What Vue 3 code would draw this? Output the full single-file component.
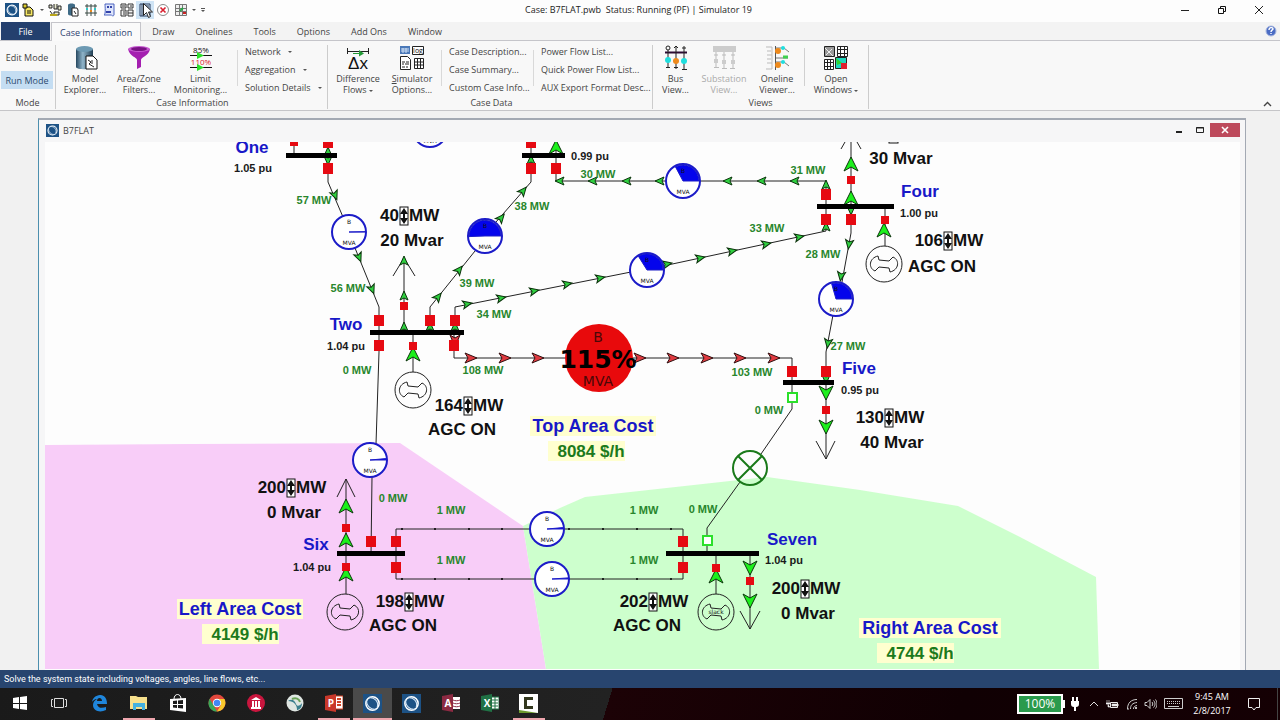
<script setup>
const tabs = ['Draw', 'Onelines', 'Tools', 'Options', 'Add Ons', 'Window']

const areas = [
  { fill: '#f8cdf8', points: '45,445 190,444 400,443 523,526 546,669 45,669' },
  { fill: '#cdffcd', points: '523,526 560,508 585,497 767,477 860,490 958,506 1020,537 1096,577 1099,669 546,669' }
]

const wires = [
  '294,142 294,155', '328,142 328,182 343,217', '355,248 379,307 379,352 376,444', '372,477 371,555',
  '404,258 404,332', '413,332 413,372', '430,332 430,307 475,251', '496,222 531,182 531,142',
  '556,142 556,181 826,181 826,206', '826,206 826,231 663,266', '631,272 455,307 455,332',
  '454,332 454,358 792,358 792,383', '851,142 851,233 842,282', '833,315 826,352 826,459',
  '885,206 885,246', '792,383 792,409 761,454', '740,482 707,528 707,555', '346,479 346,594',
  '396,555 396,529 683,529 683,579 396,579 396,555', '716,555 716,594', '750,555 750,629',
  '393,276 404,258 415,276', '337,497 346,479 355,497', '816,441 826,459 835,441',
  '740,611 750,629 760,611', '841,149 845,142', '857,142 861,149'
]

const buses = [
  [286, 337, 156], [522, 565, 156], [817, 894, 207], [370, 464, 333],
  [783, 834, 383], [337, 405, 554], [666, 759, 554]
]

const breakers = [
  [328, 142], [328, 168], [531, 142], [531, 168], [556, 168], [826, 194], [826, 219], [851, 219],
  [379, 320], [430, 320], [455, 320], [379, 345], [454, 345], [792, 371], [826, 371],
  [371, 541], [396, 541], [396, 567], [683, 541], [683, 567]
]
const smallBreakers = [
  [294, 142], [404, 306], [413, 346], [851, 180], [885, 220], [826, 410], [346, 528], [346, 567], [716, 568], [750, 581]
]
const openBreakers = [[792, 397], [707, 540]]

// x, y, heading in degrees
const flow = [
  [335, 195, 68], [359, 257, 68], [372, 289, 68], [438, 297, -51], [459, 270, -51], [501, 218, -50], [523, 191, -50],
  [560, 181, 180], [593, 181, 180], [627, 181, 180], [660, 181, 180], [728, 181, 180], [762, 181, 180], [795, 181, 180],
  [826, 185, -90], [826, 227, -90], [667, 264, -12], [700, 258, -12], [732, 251, -12], [766, 244, -12], [799, 237, -12],
  [467, 304, -12], [501, 298, -12], [534, 291, -12], [567, 284, -12], [600, 278, -12],
  [849, 244, 98], [841, 276, 98], [828, 343, 98], [404, 261, -90], [404, 296, -90], [404, 327, -90],
  [430, 327, -90], [455, 327, -90], [328, 152, -90], [328, 160, 90], [531, 160, -90], [851, 210, 90], [826, 379, 90]
]
const strongFlow = [
  [556, 148, -90], [851, 165, -90], [851, 199, -90], [884, 231, -90], [413, 355, -90], [826, 392, 90], [826, 426, 90],
  [346, 507, -90], [346, 541, -90], [346, 575, -90], [716, 577, -90], [750, 567, 90], [750, 600, 90]
]
const overload = [471, 505, 538, 640, 673, 707, 740, 774]
const dots = [402, 435, 469, 502, 569, 603, 637, 671]

const pies = [
  [430, 130, 0], [349, 232, 1], [485, 236, 182], [683, 181, 118], [647, 270, 122], [836, 299, 106],
  [370, 460, 5], [547, 529, 5], [552, 579, 4]
]
function wedge(x, y, deg) {
  const a = (deg * Math.PI) / 180
  const ex = (x + 16 * Math.cos(a)).toFixed(1)
  const ey = (y - 16 * Math.sin(a)).toFixed(1)
  return `M${x} ${y}H${x + 16}A16 16 0 ${deg > 180 ? 1 : 0} 0 ${ex} ${ey}Z`
}

const generators = [[413, 390], [884, 264], [345, 612], [716, 612]]

const flows = [
  [314, 200, '57'], [348, 288, '56'], [532, 206, '38'], [477, 283, '39'], [494, 314, '34'], [598, 174, '30'],
  [808, 170, '31'], [767, 228, '33'], [823, 254, '28'], [848, 346, '27'], [357, 370, '0'], [483, 370, '108'],
  [752, 372, '103'], [769, 410, '0'], [393, 498, '0'], [703, 509, '0'], [451, 510, '1'], [644, 510, '1'],
  [451, 560, '1'], [644, 560, '1']
]
const volts = [
  [253, 168, '1.05'], [590, 156, '0.99'], [919, 213, '1.00'], [346, 346, '1.04'], [860, 390, '0.95'],
  [312, 567, '1.04'], [784, 560, '1.04']
]
const names = [
  [252, 148, 'One'], [920, 192, 'Four'], [346, 325, 'Two'], [859, 369, 'Five'], [316, 545, 'Six'], [792, 540, 'Seven']
]
const notes = [
  [412, 241, '20 Mvar'], [901, 159, '30 Mvar'], [892, 443, '40 Mvar'], [294, 513, '0 Mvar'], [808, 614, '0 Mvar'],
  [942, 267, 'AGC ON'], [462, 430, 'AGC ON'], [403, 626, 'AGC ON'], [647, 626, 'AGC ON']
]
const setpoints = [
  [404, 216, 40], [948, 241, 106], [468, 406, 164], [889, 418, 130],
  [291, 488, 200], [409, 602, 198], [653, 602, 202], [805, 589, 200]
]
const costs = [
  { x: 593, y: 426, w: 126, vx: 586, label: 'Top Area Cost', value: '8084 $/h' },
  { x: 240, y: 609, w: 126, vx: 240, label: 'Left Area Cost', value: '4149 $/h' },
  { x: 930, y: 628, w: 142, vx: 915, label: 'Right Area Cost', value: '4744 $/h' }
]
</script>

<template>
  <div class="app">
    <svg class="defs" aria-hidden="true">
      <symbol id="pw" viewBox="0 0 20 20">
        <rect width="20" height="20" fill="#1d5285" />
        <circle cx="10" cy="10" r="7" fill="none" stroke="#fff" stroke-width="1.6" />
        <path d="M4 6C3 12 8 17 14 16M6 4C12 3 17 8 15 14" fill="none" stroke="#cfe3f5" stroke-width="1.2" />
      </symbol>
    </svg>

    <header class="titlebar">
      <div class="quick">
        <svg class="logo" width="14" height="14"><use href="#pw" /></svg>
        <button class="q" aria-label="Open case">
          <svg width="14" height="14"><path d="M3 4h5l3 3v6H3z" fill="#f5e663" stroke="#111" /><path d="M1 1h4v4H1zM5 8h4M5 10h4" fill="#d9c92c" stroke="#111" /></svg>
        </button>
        <button class="q caret" aria-label="Open recent"><i class="down"></i></button>
        <button class="q" aria-label="Save case">
          <svg width="14" height="14"><path d="M1 2h3v3H1zM6 1v5h3V1M10 3h3v4h-3zM2 8l3 4M6 9h5v3H6z" fill="#e9e9d0" stroke="#222" /><path d="M2 12h7" stroke="#b9a51c" stroke-width="2" /></svg>
        </button>
        <button class="q" aria-label="Model explorer">
          <svg width="14" height="14"><path d="M2 2c0-2 7-2 7 0v9c0 2-7 2-7 0z" fill="#3f6b86" /><path d="M6 5h5l1 2v6H6z" fill="#fff" stroke="#222" /><path d="M8 8l2 3" stroke="#222" /></svg>
        </button>
        <button class="q" aria-label="Bus view">
          <svg width="14" height="14"><path d="M1 3h12M1 10h12M3 1v12M7 1v12M11 1v12" stroke="#3b4a44" fill="none" /><path d="M2 6h2M10 6h2" stroke="#2bc7c7" stroke-width="2" /><path d="M6 8h2" stroke="#e88a1f" stroke-width="2" /></svg>
        </button>
        <button class="q" aria-label="Log">
          <svg width="14" height="14"><path d="M3 1h9v11c-1 2-2 0-3 0H2c2-1 1-8 1-11z" fill="#dfe6fb" stroke="#4a62c0" /><path d="M5 4h2M8 4h2M4 9h5" stroke="#3344aa" stroke-width="2" /></svg>
        </button>
        <button class="q" aria-label="Simulator options">
          <svg width="14" height="14"><path d="M1 1h5v4H1zM8 1h5v4H8zM1 7h5v6H1zM8 7h5v6H8z" fill="#f4f4f4" stroke="#333" /><path d="M8 10h5M3 9h2M3 11h2M10 3h2M2 3h3" stroke="#333" /></svg>
        </button>
        <button class="q hot" aria-label="Solve power flow">
          <svg width="14" height="14"><path d="M2 1h10v12H2z" fill="#dcebf5" stroke="#243a5e" /><path d="M4 1v12M6 3h5M6 5h5M6 7h5" stroke="#243a5e" /></svg>
        </button>
        <button class="q" aria-label="Abort">
          <svg width="14" height="14"><circle cx="7" cy="7" r="5.500" fill="#fff" stroke="#888" /><path d="M4.500 4.500l5 5M9.500 4.500l-5 5" stroke="#d81f2e" stroke-width="1.600" /></svg>
        </button>
        <button class="q" aria-label="Open windows">
          <svg width="14" height="14"><path d="M1.500 1.500h11v11h-11zM1 5.500h12M1 8.500h12M5.500 1v12M8.500 1v12" fill="#eee" stroke="#777" /><path d="M6 8l3-3" stroke="#26a944" stroke-width="2" /><path d="M9 10h3" stroke="#c22" stroke-width="2" /></svg>
        </button>
        <button class="q caret" aria-label="Window choices"><i class="down"></i></button>
        <button class="q more" aria-label="Customize toolbar"><b></b><i class="down"></i></button>
      </div>
      <h1>Case: B7FLAT.pwb&nbsp; Status: Running (PF) | Simulator 19</h1>
      <div class="winctl">
        <button aria-label="Minimize"><svg width="10" height="10"><path d="M1 5.500h8" stroke="#222" /></svg></button>
        <button aria-label="Restore"><svg width="10" height="10"><path d="M1.500 3.500h5v5h-5zM3.500 3V1.500h5v5H7" fill="none" stroke="#111" /></svg></button>
        <button aria-label="Close"><svg width="10" height="10"><path d="M1 1l8 8M9 1l-8 8" stroke="#222" /></svg></button>
      </div>
    </header>

    <nav class="tabs">
      <button class="file">File</button>
      <button class="tab current">Case Information</button>
      <button v-for="t in tabs" :key="t" class="tab">{{ t }}</button>
      <button class="help" aria-label="Help">
        <svg width="12" height="12"><circle cx="6" cy="6" r="5" fill="#4a6cc4" stroke="#a9b8df" /><path d="M4 5c0-3 4-3 4-1 0 1-2 1-2 3M6 8v1" fill="none" stroke="#fff" stroke-width="1.400" /></svg>
      </button>
    </nav>

    <section class="ribbon">
      <div class="group mode">
        <div class="body modes">
          <button>Edit Mode</button>
          <button class="on">Run Mode</button>
        </div>
        <h2>Mode</h2>
      </div>

      <div class="group info">
        <div class="body">
          <button class="big">
            <svg width="26" height="26">
              <defs><linearGradient id="drum"><stop offset="0" stop-color="#274860" /><stop offset=".4" stop-color="#8fb4c9" /><stop offset="1" stop-color="#1f3d52" /></linearGradient></defs>
              <path d="M4 4v18c0 3 17 3 17 0V4z" fill="url(#drum)" /><ellipse cx="12.500" cy="4" rx="8.500" ry="3" fill="#6d9ab3" />
              <path d="M14 11h7l4 4v9H14z" fill="#fff" stroke="#111" /><path d="M16 15l3 2-2 2 5 3M20 15v4" stroke="#222" fill="none" />
            </svg>
            <span>Model<br />Explorer...</span>
          </button>
          <button class="big">
            <svg width="26" height="26">
              <path d="M2 4c2 8 9 8 9 11v9l4-2v-7c0-3 8-4 9-11z" fill="#a41fb0" /><ellipse cx="13" cy="4" rx="11" ry="3" fill="#c65ad0" /><ellipse cx="13" cy="4" rx="8" ry="2" fill="#7b1386" />
            </svg>
            <span>Area/Zone<br />Filters...</span>
          </button>
          <button class="big limit">
            <svg width="26" height="26">
              <text x="13" y="8" class="pct">85%</text><text x="13" y="20" class="pct red">110%</text>
              <path d="M2 10.500h22M2 22.500h22" stroke="#111" /><path d="M9 7l7 3.500-7 3.500zM9 19l7 3.500-7 3.500z" fill="#2be02b" />
            </svg>
            <span>Limit<br />Monitoring...</span>
          </button>
          <div class="list narrow">
            <button>Network <i class="down"></i></button>
            <button>Aggregation <i class="down"></i></button>
            <button>Solution Details <i class="down"></i></button>
          </div>
        </div>
        <h2>Case Information</h2>
      </div>

      <div class="group data">
        <div class="body">
          <button class="big">
            <svg width="26" height="26">
              <path d="M2 6.500h22M2.500 3v6M23.500 3v6" stroke="#222" /><path d="M8 8.500h8" stroke="#239b37" /><path d="M14 5l5 3.500-5 3z" fill="#239b37" />
              <text x="13" y="24" class="dx">Δx</text>
            </svg>
            <span>Difference<br />Flows <i class="down"></i></span>
          </button>
          <button class="big">
            <svg width="26" height="26">
              <path d="M1 1h10v8H1z" fill="#4a78b8" /><path d="M2 4h8M2 6h8M4 3v5M7 3v5" stroke="#cfe0f5" />
              <path d="M13.500 1.500h11v8h-11z" fill="#fff" stroke="#222" /><text x="19" y="8" class="log">log</text>
              <path d="M1.500 11.500h7l3 3v10h-10z" fill="#fff" stroke="#222" /><path d="M3 17h3M7 17h3M3 19h2M6 19h4M3 22h3M7 22h2" stroke="#222" />
              <path d="M15.500 13.500h9v10h-9zM18.500 13v11M21.500 13v11M15 17h10M15 20h10" fill="#fff" stroke="#222" />
            </svg>
            <span><u>S</u>imulator<br />Options...</span>
          </button>
          <div class="list">
            <button>Case Description...</button>
            <button>Case Summary...</button>
            <button>Custom Case Info...</button>
          </div>
          <div class="list wide">
            <button>Power Flow List...</button>
            <button>Quick Power Flow List...</button>
            <button>AUX Export Format Desc...</button>
          </div>
        </div>
        <h2>Case Data</h2>
      </div>

      <div class="group views">
        <div class="body">
          <button class="big bus">
            <svg width="26" height="26">
              <path d="M2 7.500h22" stroke="#2d0a33" stroke-width="2" /><circle cx="5" cy="3" r="2" fill="none" stroke="#222" />
              <path d="M5 5v18M13 1v23M21 1v24M3 22.500h4M11 22.500h4M19 24.500h5M11 3l2-2 2 2M19 3h4" stroke="#222" fill="none" />
              <circle cx="5" cy="15" r="3" fill="#1fdede" /><circle cx="13" cy="16" r="3" fill="#ee8a1c" /><circle cx="21" cy="16" r="3" fill="#1fdede" />
            </svg>
            <span>Bus<br />View...</span>
          </button>
          <button class="big sub" disabled>
            <svg width="26" height="26">
              <path d="M2 1h23v6H2z" fill="#ccc" /><path d="M5 7v15M13 7v17M22 7v17M3 22.500h5M11 23.500h5M19 23.500h5M3 10h4M11 10h4M20 10h4" stroke="#bbb" />
              <path d="M3 16h4M11 17h4M20 17h4" stroke="#ccc" stroke-width="4" />
            </svg>
            <span>Substation<br />View...</span>
          </button>
          <button class="big">
            <svg width="26" height="26">
              <path d="M2 2h6v22H2M3 6h4M3 10h5M3 14h4M3 18h5" stroke="#bbb" fill="none" /><path d="M11.500 1v24" stroke="#555" />
              <path d="M12 3h8l5 4M12 13h12M12 17h8l5 4" stroke="#777" fill="none" />
              <circle cx="14" cy="6" r="3" fill="#ee8a1c" /><circle cx="14" cy="20" r="3" fill="#ee8a1c" /><circle cx="19" cy="3" r="2" fill="#1fdede" /><circle cx="19" cy="17" r="2" fill="#1fdede" /><path d="M19 12h5" stroke="#3fd14f" stroke-width="3" />
            </svg>
            <span>Oneline<br />Viewer...</span>
          </button>
          <div class="sep"></div>
          <button class="big open">
            <svg width="26" height="26">
              <path d="M1.500 1.500h10v10h-10z" fill="#999" stroke="#222" /><path d="M2 3l8 8M3 10l6-6" stroke="#eee" />
              <path d="M14.500 1.500h10v10h-10zM17.500 1v11M21.500 1v11M14 4.500h11M14 8.500h11M1.500 14.500h9v10h-9zM4.500 14v11M7.500 14v11M1 17.500h10M1 21.500h10" fill="#fff" stroke="#222" />
              <path d="M12.500 12.500h11v11h-11z" fill="#1fd7c0" stroke="#222" /><path d="M13 13l6 5-5 2z" fill="#2ed42e" /><path d="M18 18h6v6h-6z" fill="#e01f2e" />
            </svg>
            <span>Open<br />Windows <i class="down"></i></span>
          </button>
        </div>
        <h2>Views</h2>
      </div>

      <button class="collapse" aria-label="Collapse ribbon"><svg width="9" height="6"><path d="M1 5l3.500-3.500L8 5" fill="none" stroke="#444" stroke-width="1.400" /></svg></button>
    </section>

    <main class="workspace">
      <article class="oneline">
        <header>
          <svg width="13" height="13"><use href="#pw" /></svg>
          <h2>B7FLAT</h2>
          <button aria-label="Minimize diagram"><svg width="10" height="10"><path d="M2 7h6" stroke="#222" stroke-width="2" /></svg></button>
          <button aria-label="Maximize diagram"><svg width="10" height="10"><path d="M1.500 2.500h7v5h-7zM1 3h8" fill="none" stroke="#222" /></svg></button>
          <button class="x" aria-label="Close diagram"><svg width="8" height="8"><path d="M1 1l6 6M7 1L1 7" stroke="#fff" stroke-width="1.600" /></svg></button>
        </header>
        <svg class="canvas" role="img" aria-label="B7FLAT one-line diagram">
          <g transform="translate(-45 -142)">
            <polygon v-for="a in areas" :key="a.fill" :points="a.points" :fill="a.fill" />
            <polyline v-for="w in wires" :key="w" :points="w" class="wire" />
            <path v-for="f in flow" :key="f.join()" d="M5 0L-4-4L-2 0L-4 4Z" class="arrow" :transform="`translate(${f[0]} ${f[1]}) rotate(${f[2]})`" />
            <path v-for="f in strongFlow" :key="f.join()" d="M8 0L-6-7L-2 0L-6 7Z" class="arrow strong" :transform="`translate(${f[0]} ${f[1]}) rotate(${f[2]})`" />
            <path v-for="x in overload" :key="x" d="M6 0L-6-5L-3 0L-6 5Z" class="arrow over" :transform="`translate(${x} 358)`" />
            <path d="M6 0L-6-5L-3 0L-6 5Z" class="arrow over" transform="translate(455 341) rotate(90)" />
            <rect v-for="b in buses" :key="b.join()" :x="b[0]" :y="b[2] - 3" :width="b[1] - b[0]" height="5" />
            <g v-for="x in dots" :key="x"><circle :cx="x" cy="529" r="1" /><circle :cx="x" cy="579" r="1" /></g>
            <rect v-for="b in breakers" :key="b.join()" :x="b[0] - 5" :y="b[1] - 5" width="10" height="11" class="closed" />
            <rect v-for="b in smallBreakers" :key="b.join()" :x="b[0] - 4" :y="b[1] - 4" width="8" height="8" class="closed" />
            <rect v-for="b in openBreakers" :key="b.join()" :x="b[0] - 4" :y="b[1] - 4" width="9" height="9" class="opened" />

            <g v-for="(p, i) in pies" :key="p.join()">
              <circle :cx="p[0]" :cy="p[1]" r="17" class="pie" />
              <path :d="wedge(p[0], p[1], p[2])" class="fillpie" />
              <text v-if="i > 0" :x="p[0]" :y="p[1] - 8" class="tiny">B</text>
              <text :x="p[0]" :y="p[1] + 13" class="tiny">MVA</text>
            </g>

            <circle cx="599" cy="358" r="34" fill="#e80a0c" />
            <text x="598" y="342" class="mid">B</text>
            <text x="598" y="368" class="load">115%</text>
            <text x="598" y="386" class="mid">MVA</text>

            <g v-for="g in generators" :key="g.join()" :transform="`translate(${g[0]} ${g[1]})`" class="gen">
              <circle r="18" />
              <path d="M-6-8L-5-4L5-3L9-7C16-4 15 6 6 8L5 4L-5 3L-9 7C-16 4-15-6-6-8Z" />
            </g>
            <text x="716" y="614" class="tiny">slack</text>

            <g class="offline"><circle cx="750" cy="468" r="17" /><path d="M738 456l24 24M762 456l-24 24" /></g>

            <rect x="889" y="134" width="9" height="9" class="spinbox" />
            <g v-for="s in setpoints" :key="s.join()" class="note">
              <text :x="s[0] - 5" :y="s[1] + 5" class="end">{{ s[2] }}</text>
              <rect :x="s[0] - 4" :y="s[1] - 9" width="8" height="18" class="spinbox" />
              <path :transform="`translate(${s[0]} ${s[1]})`" d="M0-8L4-2H1V2H4L0 8L-4 2H-1V-2H-4Z" />
              <text :x="s[0] + 5" :y="s[1] + 5" class="start">MW</text>
            </g>
            <text v-for="n in notes" :key="n.join()" :x="n[0]" :y="n[1] + 5" class="note">{{ n[2] }}</text>
            <text v-for="n in names" :key="n[2]" :x="n[0]" :y="n[1] + 5" class="name">{{ n[2] }}</text>
            <text v-for="v in volts" :key="v.join()" :x="v[0]" :y="v[1] + 4" class="volt">{{ v[2] }} pu</text>
            <text v-for="f in flows" :key="f.join()" :x="f[0]" :y="f[1] + 4" class="mw">{{ f[2] }} MW</text>

            <g v-for="c in costs" :key="c.label">
              <rect :x="c.x - c.w / 2" :y="c.y - 10" :width="c.w" height="20" fill="#ffffcf" />
              <rect :x="c.vx - 38" :y="c.y + 15" width="77" height="20" fill="#ffffcf" />
              <text :x="c.x" :y="c.y + 6" class="name cost">{{ c.label }}</text>
              <text :x="c.vx + 5" :y="c.y + 31" class="note price">{{ c.value }}</text>
            </g>
          </g>
        </svg>
      </article>
    </main>

    <footer class="status">Solve the system state including voltages, angles, line flows, etc...</footer>

    <div class="taskbar">
      <button class="t" aria-label="Start"><svg width="14" height="14"><path d="M0 2l6-1v6H0zM7 1l7-1v7H7zM0 8h6v5l-6-1zM7 8h7v6l-7-1z" fill="#fff" /></svg></button>
      <button class="t w" aria-label="Task view"><svg width="18" height="12"><path d="M4.500 1.500h9v9h-9zM3 2.500H1.500v7H3M15 2.500h1.500v7H15" fill="none" stroke="#ddd" /></svg></button>
      <button class="t w" aria-label="Edge"><svg width="18" height="18"><path d="M2 8C3 2 8 1 11 1c5 1 6 5 6 9H7c1 5 6 4 9 3v3c-6 3-13 1-13-5 0-3 2-5 4-6-3 0-4 2-5 3zM7 7h5c0-4-5-4-5 0z" fill="#1f86dc" /></svg></button>
      <button class="t run" aria-label="File Explorer"><svg width="20" height="18"><path d="M1 2h6l2 1h9v12H1z" fill="#f6e08c" /><path d="M4 9h12v7h-3v-3H7v3H4z" fill="#43b1df" /></svg></button>
      <button class="t" aria-label="Store"><svg width="18" height="20"><path d="M5 6c0-6 7-6 7 0" fill="none" stroke="#fff" /><path d="M1 6l16-1v14L1 17z" fill="#fff" /><path d="M4 8l4-.5V11H4zM9 7.400l5-.4v4H9zM4 12h4v3l-4-.4zM9 12h5v3.500l-5-.4z" fill="#1b1b1b" /></svg></button>
      <button class="t" aria-label="Chrome"><svg width="18" height="18"><circle cx="9" cy="9" r="8.500" fill="#e2483d" /><path d="M1.600 4.800L6 12l3 5.500C2 17.500-1.500 10.500 1.600 4.800z" fill="#3aa757" /><path d="M9 5h7.500c3 6-2 12.500-7.500 12.500L13 11z" fill="#f8c92c" /><circle cx="9" cy="9" r="4.200" fill="#fff" /><circle cx="9" cy="9" r="3.300" fill="#4387f4" /></svg></button>
      <button class="t" aria-label="Library"><svg width="18" height="18"><circle cx="9" cy="9" r="9" fill="#c9163e" /><path d="M9 3l5 3H4zM5 7h2v6H5zM8 7h2v6H8zM11 7h2v6h-2zM4 13h10v2H4z" fill="#fff" /></svg></button>
      <button class="t" aria-label="Webex"><svg width="18" height="18"><circle cx="9" cy="9" r="8.500" fill="#dfe6e2" /><path d="M2 7c4-3 7 0 8 3 1 3 4 2 6-1 0 5-3 7-5 7 0-5-3-9-9-9z" fill="#3a7d8c" /><path d="M6 5c4-2 7 0 8 3" stroke="#6ba35a" stroke-width="2" fill="none" /></svg></button>
      <button class="t run" aria-label="PowerPoint"><svg width="18" height="18"><path d="M9 2h9v13H9z" fill="#fff" stroke="#d04526" /><path d="M12 5h4M12 8h4M12 11h4" stroke="#d04526" stroke-width="2" /><path d="M0 2l11-2v18L0 16z" fill="#c9382a" /><text x="6" y="13" class="app-letter">P</text></svg></button>
      <button class="t run active" aria-label="Simulator"><svg width="19" height="19"><use href="#pw" /></svg></button>
      <button class="t" aria-label="Simulator add-on"><svg width="19" height="19"><use href="#pw" /></svg></button>
      <button class="t" aria-label="Access"><svg width="18" height="18"><path d="M11 3h7v12h-7z" fill="#fff" /><path d="M11 6c2 1 5 1 7 0M11 9c2 1 5 1 7 0M11 12c2 1 5 1 7 0" stroke="#8c2a42" fill="none" /><path d="M0 2l11-2v18L0 16z" fill="#8c2a42" /><text x="6" y="13" class="app-letter">A</text></svg></button>
      <button class="t" aria-label="Excel"><svg width="18" height="18"><path d="M10 3h8v12h-8z" fill="#fff" stroke="#207245" /><path d="M11 6h6M11 9h6M11 12h6M14 3v12" stroke="#207245" /><path d="M0 2l11-2v18L0 16z" fill="#207245" /><text x="6" y="13" class="app-letter">X</text></svg></button>
      <button class="t run" aria-label="Camtasia"><svg width="19" height="19"><path d="M0 0h19v19H0z" fill="#fff" /><path d="M0 16l19 3H0z" fill="#6c9a2e" /><path d="M14 4.500H6.500v9H14" fill="none" stroke="#33381f" stroke-width="3" /></svg></button>

      <div class="tray">
        <div class="battery">100%</div>
        <svg class="plug" width="10" height="14"><path d="M1 4h8v3c0 2-1 3-3 3v4H4v-4C2 10 1 9 1 7zM2 0h2v4H2zM6 0h2v4H6z" fill="#fff" /></svg>
        <button aria-label="Hidden icons"><svg width="10" height="8"><path d="M1 6l4-4 4 4" fill="none" stroke="#ddd" /></svg></button>
        <button aria-label="Power"><svg width="13" height="10"><path d="M4.500 3.500h7v5h-7zM12 5v2" fill="none" stroke="#eee" /><path d="M6 5h5v2H6zM1 1v3M3 1v3M0 4h4v1H0zM2 5v3h2" fill="#eee" stroke="#eee" stroke-width=".6" /></svg></button>
        <button aria-label="Network"><svg width="12" height="12"><path d="M1.500 11C1.500 5 5 1.500 11 1.500M4.500 11c0-4 2-6 6.500-6.500M7.500 11c0-2 1-3 3.500-3.500M1 11h2" fill="none" stroke="#ccc" /><circle cx="10" cy="10" r="1" fill="#fff" /></svg></button>
        <button aria-label="Volume"><svg width="13" height="12"><path d="M1 4.500h2l3-3v9l-3-3H1zM8 4c1 1 1 3 0 4M9.500 2.500c2 2 2 5 0 7M11.500 1.500c2 3 2 6 0 9" fill="none" stroke="#ccc" /></svg></button>
        <button class="kb" aria-label="Touch keyboard"><svg width="19" height="12"><path d="M.500 .500h18v10H.500z" fill="none" stroke="#ccc" /><path d="M3 3.500h13M3 5.500h13" stroke="#ccc" stroke-dasharray="1 1" /><path d="M4 8.500h11" stroke="#ccc" /></svg></button>
        <div class="clock">9:45 AM<br />2/8/2017</div>
        <button class="bell" aria-label="Notifications"><svg width="14" height="14"><path d="M1.500 1.500h11v9H9L7 13l-2-2.500H1.500z" fill="none" stroke="#eee" /></svg></button>
      </div>
    </div>

    <svg class="pointer" width="10" height="16" aria-hidden="true"><path d="M.500 .500v12l3-3 2 5 2-1-2-4.500h4z" fill="#fff" stroke="#222" /></svg>
  </div>
</template>

<style>
body { background: #f1f1f1; }
</style>

<style scoped>
.app {
  position: relative;
  display: flex;
  flex-direction: column;
  height: 100vh;
  font: 9px/11px "Open Sans", "Noto Sans", sans-serif;
  color: #444;
  overflow: hidden;
}
.app * { box-sizing: border-box; }
button { font: inherit; color: inherit; background: none; border: 0; padding: 0; margin: 0; white-space: nowrap; }
h1, h2 { font: inherit; margin: 0; }
svg { display: block; }
.defs { position: absolute; width: 0; height: 0; }
.pointer { position: absolute; left: 143px; top: 3px; }
.down {
  display: inline-block;
  border: 2px solid transparent;
  border-top-color: #555;
  border-bottom: 0;
  vertical-align: middle;
}

.titlebar { display: grid; grid-template-columns: 1fr auto 1fr; align-items: center; height: 22px; padding: 0 3px 3px 0; background: #fdfdfd; }
.titlebar h1 { color: #222; }
.quick { display: flex; align-items: center; padding-left: 5px; }
.quick .logo { margin-right: 1px; }
.q { display: grid; place-items: center; width: 18px; height: 18px; }
.q.caret { width: 8px; }
.q.more { width: 10px; align-content: center; gap: 1px; }
.q.more b { width: 4px; height: 1px; background: #555; }
.q.hot { background: #cfe4f5; }
.winctl { display: flex; justify-content: flex-end; }
.winctl button { width: 37px; height: 18px; display: grid; place-items: center; }

.tabs { display: flex; height: 19px; padding-left: 1px; background: #f3f3f3; border-bottom: 1px solid #c5c5ca; }
.tabs .file { width: 49px; background: #24406e; color: #fff; }
.tab { padding: 0 10px 0 11px; }
.tab.current { height: 19px; margin-left: 1px; padding: 0 8px; background: #fafafa; border: 1px solid #c5c5ca; border-bottom: 0; color: #2b4170; }
.help { margin-left: auto; padding-right: 3px; }

.ribbon { display: flex; height: 70px; background: #f8f8f8; border-bottom: 1px solid #c5c5c8; }
.group { display: flex; flex-direction: column; border-right: 1px solid #ccc; margin: 4px 0 1px; }
.group h2 { text-align: center; line-height: 13px; }
.body { display: flex; height: 51px; }
.mode { width: 56px; }
.info { width: 272px; padding-left: 2px; }
.data { width: 325px; padding-left: 3px; }
.views { width: 216px; }
.modes { flex-direction: column; padding: 3px 2px 0 1px; }
.modes button { height: 19px; }
.modes .on { background: #c4ddf2; color: #2b4a6e; height: 18px; margin-top: 4px; }
.big { display: flex; flex-direction: column; align-items: center; width: 54px; }
.big span { margin-top: 2px; }
.big:disabled { color: #aaa; }
.big.limit { width: 69px; }
.big.bus { width: 45px; }
.big.sub { width: 52px; }
.big.open { width: 62px; }
.big svg { overflow: visible; }
.list { display: flex; flex-direction: column; align-items: flex-start; width: 82px; margin: -3px 0 0 10px; position: relative; }
.list.wide { width: 108px; }
.list::before { content: ""; position: absolute; left: -8px; top: 8px; height: 36px; width: 1px; background: #d9d9d9; }
.list button { height: 18px; }
.list .down { margin-left: 5px; }
.sep { width: 1px; height: 38px; margin: 3px 0; background: #d0d0d0; }
.pct { font: 8px "Open Sans", sans-serif; text-anchor: middle; fill: #111; }
.pct.red { fill: #d8202c; }
.dx { font: 17px "Liberation Sans", sans-serif; text-anchor: middle; fill: #111; }
.log { font: 7px "Open Sans", sans-serif; text-anchor: middle; fill: #111; }
.collapse { margin: auto 8px 3px auto; }

.workspace { flex: 1; min-height: 0; display: flex; padding: 7px 34px 0 38px; background: #f1f1f1; }
.oneline { flex: 1; min-width: 0; display: flex; flex-direction: column; padding: 0 5px 0 6px; border: 1px solid #a3a9b3; border-top-width: 2px; border-left-color: #4d8fae; border-bottom: 0; background: #f6f6f7; }
.oneline header { display: flex; align-items: center; height: 22px; padding-bottom: 2px; }
.oneline h2 { flex: 1; margin-left: 4px; }
.oneline header > svg { margin-left: 1px; }
.oneline header button { display: grid; place-items: center; width: 21px; height: 14px; }
.oneline header .x { width: 30px; background: #bd4a5c; }
.canvas { flex: 1; min-height: 0; width: 100%; background: #fdfdfd; overflow: hidden; }

.wire { fill: none; stroke: #222; }
.arrow { fill: #2fd040; stroke: #0c330c; stroke-width: 1; }
.arrow.strong { fill: #1cf01c; }
.arrow.over { fill: #e03a40; stroke: #301010; }
.closed { fill: #e60a12; }
.opened { fill: #fff; stroke: #2be02b; stroke-width: 2; }
.pie { fill: #fff; stroke: #1c1cc8; stroke-width: 2; }
.fillpie { fill: #0404ec; stroke: #1c1cc8; }
.canvas text { font-family: "Liberation Sans", Arial, sans-serif; font-weight: bold; text-anchor: middle; }
.canvas .tiny { font: 6px "DejaVu Sans", sans-serif; fill: #111; }
.canvas .mid { font: 14px "DejaVu Sans", sans-serif; fill: #4a0808; }
.canvas .load { font: bold 25px "DejaVu Sans", sans-serif; fill: #000; }
.gen { fill: none; stroke: #222; }
.offline { fill: none; stroke: #1a7a1a; stroke-width: 2; }
.spinbox { fill: #fff; stroke: #111; }
.note { font-size: 17px; fill: #111; }
.canvas .start { text-anchor: start; }
.canvas .end { text-anchor: end; }
.name { font-size: 17px; fill: #1818c8; }
.cost { font-size: 18px; }
.price { fill: #1c7a1c; }
.volt { font-size: 11px; fill: #1a1a1a; }
.mw { font-size: 11px; fill: #28862c; }

.status { height: 18px; padding-left: 4px; font-family: Roboto, sans-serif; line-height: 18px; background: #28456f; color: #fff; }
.taskbar { display: flex; height: 32px; background: linear-gradient(107deg, #1a1a1a 0, #222 47.5%, #1c0206 47.5%, #100003 75%, #150004 100%); }
.t { display: grid; place-items: center; width: 39px; border-bottom: 2px solid transparent; flex: none; }
.t.w { width: 40px; }
.t.run { background: linear-gradient(#eea6ae, #eea6ae) bottom / 32px 2px no-repeat border-box; }
.t.active { background: linear-gradient(#eea6ae, #eea6ae) bottom / 100% 2px no-repeat border-box, #4a4a4a; }
.app-letter { font: bold 10px "Open Sans", sans-serif; text-anchor: middle; fill: #fff; }
.tray { display: flex; align-items: center; margin-left: auto; padding-right: 2px; color: #fff; }
.battery { position: relative; width: 46px; height: 20px; margin-right: 7px; border: 2px solid #fff; background: #2a9a4c; font-size: 12px; line-height: 16px; text-align: center; }
.battery::after { content: ""; position: absolute; right: -4px; top: 4px; width: 2px; height: 8px; background: #fff; }
.plug { margin-right: 4px; }
.tray button { display: grid; place-items: center; width: 19px; height: 32px; }
.tray .kb { width: 26px; }
.clock { width: 52px; text-align: center; line-height: 14px; }
.tray .bell { width: 40px; padding-right: 8px; border-right: 1px solid #444; }
</style>
